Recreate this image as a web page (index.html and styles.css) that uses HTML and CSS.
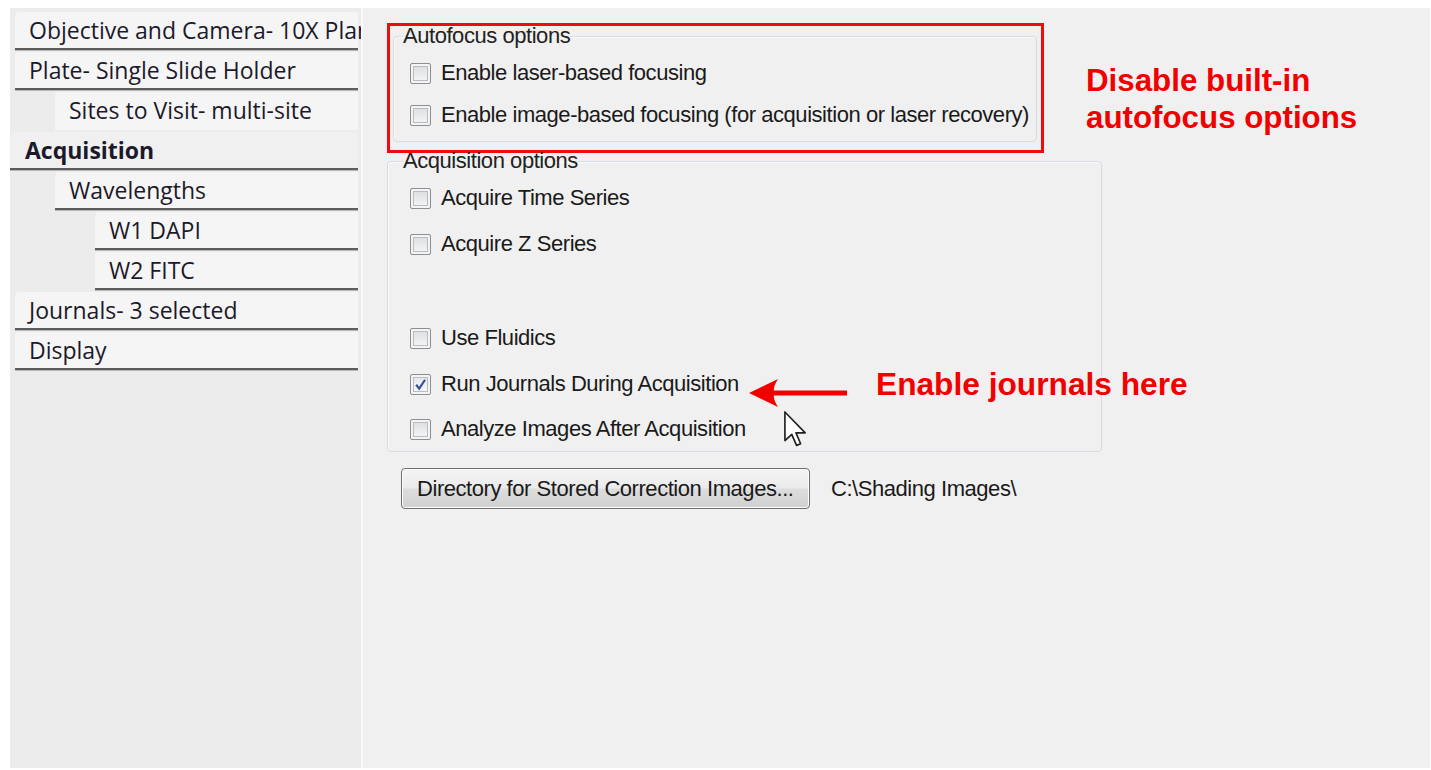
FILE: index.html
```html
<!DOCTYPE html>
<html lang="en">
<head>
<meta charset="utf-8">
<title>Acquisition settings</title>
<link rel="stylesheet" href="styles.css">
</head>
<body>
<div class="window">
  <nav class="tree">
    <div class="node lvl0">Objective and Camera- 10X Plan Fluor</div>
    <div class="node lvl0">Plate- Single Slide Holder</div>
    <div class="node lvl1 no-rule">Sites to Visit- multi-site</div>
    <div class="node current">Acquisition</div>
    <div class="node lvl1">Wavelengths</div>
    <div class="node lvl2">W1 DAPI</div>
    <div class="node lvl2">W2 FITC</div>
    <div class="node lvl0">Journals- 3 selected</div>
    <div class="node lvl0">Display</div>
  </nav>

  <main class="pane">
    <div class="callout-box">
      <fieldset class="group group-af">
        <legend>Autofocus options</legend>
        <label class="check"><span class="box"></span>Enable laser-based focusing</label>
        <label class="check"><span class="box"></span>Enable image-based focusing (for acquisition or laser recovery)</label>
      </fieldset>
    </div>

    <fieldset class="group group-acq">
      <legend>Acquisition options</legend>
      <label class="check"><span class="box"></span>Acquire Time Series</label>
      <label class="check"><span class="box"></span>Acquire Z Series</label>
      <div class="spacer"></div>
      <label class="check"><span class="box"></span>Use Fluidics</label>
      <label class="check"><span class="box checked"><svg viewBox="0 0 12 12" width="13" height="13"><path d="M2 6.2 L4.8 9.8 L10.2 1.6" fill="none" stroke="#34549c" stroke-width="2"/></svg></span>Run Journals During Acquisition</label>
      <label class="check last"><span class="box"></span>Analyze Images After Acquisition</label>
    </fieldset>

    <div class="dir-row">
      <button class="btn" type="button">Directory for Stored Correction Images...</button>
      <span class="path">C:\Shading Images\</span>
    </div>

    <p class="note note-af">Disable built-in<br>autofocus options</p>

    <svg class="pointer-arrow" viewBox="0 0 100 32" width="100" height="32">
      <path d="M1 16 L30 2 Q25 10 26 13.5 L99 13.5 L99 18.5 L26 18.5 Q25 22 30 30 Z" fill="#f20000"/>
    </svg>
    <p class="note note-journals">Enable journals here</p>

    <svg class="cursor" viewBox="0 0 13 20" width="24" height="37">
      <path d="M0.5 0.5 L0.5 16 L4.2 12.6 L6.8 18.6 L9 17.7 L6.5 11.8 L11.5 11.8 Z" fill="#fff" stroke="#222" stroke-width="0.9" stroke-linejoin="round"/>
    </svg>
  </main>
</div>
</body>
</html>
```

FILE: styles.css
```css
html, body {
  margin: 0;
  background: #ffffff;
}

body {
  padding: 8px 1px 2px 10px;
}

.window {
  display: flex;
  height: 760px;
  background: #efefef;
}

/* ---------- navigation tree ---------- */
.tree {
  width: 353px;
  flex: none;
  padding: 4px 3px 0 0;
  box-sizing: border-box;
  background: #ececec;
  overflow: hidden;
  border-right: 2px solid #fafafa;
  font-family: "Open Sans", "Noto Sans", sans-serif;
  font-size: 23px;
  color: #1c1a2a;
}

.node {
  height: 36px;
  line-height: 36px;
  margin-bottom: 2px;
  padding-left: 14px;
  background: #f5f5f5;
  border-bottom: 2px solid #5c5c5c;
  box-shadow: 0 1px 0 #b8b8b8;
  border-top-left-radius: 4px;
  white-space: nowrap;
  overflow: visible;
}

.lvl0 { margin-left: 5px; }
.lvl1 { margin-left: 45px; }
.lvl2 { margin-left: 85px; }

.no-rule {
  border-bottom-color: transparent;
  box-shadow: none;
}

.current {
  margin-left: 0;
  padding-left: 15px;
  font-weight: 700;
  background: #f0f0f0;
}

/* ---------- options pane ---------- */
.pane {
  position: relative;
  flex: 1;
  padding: 15px 0 0 24px;
  background: #f0f0f0;
  font-family: "Liberation Sans", Arial, sans-serif;
  font-size: 22px;
  letter-spacing: -0.45px;
  color: #1a1a1a;
}

.callout-box {
  border: 3px solid #ee0d0d;
  padding: 0 4px 8px 3px;
  box-sizing: content-box;
  width: 644px;
}

.group {
  margin: 0;
  border: 1px solid #d5dce3;
  border-radius: 4px;
  box-shadow: inset 1px 1px 0 #fbfbfb;
}

.group legend {
  padding: 0;
  height: 20px;
  line-height: 20px;
  color: #222;
}

.group-af {
  padding: 6px 0 5px 16px;
}

.group-af legend {
  margin-left: -7px;
}

.group-af .check {
  height: 42px;
}

.group-acq {
  width: 715px;
  box-sizing: border-box;
  margin-top: -2px;
  padding: 4px 0 0 22px;
}

.group-acq legend {
  margin-left: -7px;
}

.group-acq .check {
  height: 46px;
}

.group-acq .check.last {
  height: 44px;
}

.spacer {
  height: 48px;
}

.check {
  display: flex;
  align-items: center;
  gap: 10px;
  white-space: nowrap;
}

.box {
  flex: none;
  width: 19px;
  height: 19px;
  border: 1px solid #8c8f93;
  border-radius: 2px;
  background: linear-gradient(#d9dcdf, #f7f7f7);
  box-shadow: inset 0 0 0 2px #f4f4f4, inset 0 0 0 3px #b9bdc2;
  display: flex;
  align-items: center;
  justify-content: center;
}

.box.checked {
  background: linear-gradient(#e3e6ea, #fafafa);
}

.dir-row {
  display: flex;
  align-items: center;
  gap: 21px;
  margin: 16px 0 0 14px;
}

.btn {
  width: 409px;
  height: 41px;
  padding: 0 0 0 15px;
  text-align: left;
  font: inherit;
  letter-spacing: inherit;
  color: #1a1a1a;
  border: 1px solid #6f6f6f;
  border-radius: 4px;
  background: linear-gradient(#f4f4f4 0%, #ebebeb 48%, #dddddd 52%, #d0d0d0 100%);
  box-shadow: inset 0 0 0 1px #fcfcfc;
}

.path {
  color: #1a1a1a;
}

/* ---------- annotations ---------- */
.note {
  position: absolute;
  margin: 0;
  font-family: "Liberation Sans", Arial, sans-serif;
  font-weight: 700;
  letter-spacing: 0;
  color: #f20000;
  line-height: 37px;
}

.note-af {
  left: 723px;
  top: 54px;
  font-size: 31.3px;
}

.note-journals {
  left: 513px;
  top: 358px;
  font-size: 31.7px;
}

.pointer-arrow {
  position: absolute;
  left: 385px;
  top: 369px;
}

.cursor {
  position: absolute;
  left: 421px;
  top: 403px;
}
```
